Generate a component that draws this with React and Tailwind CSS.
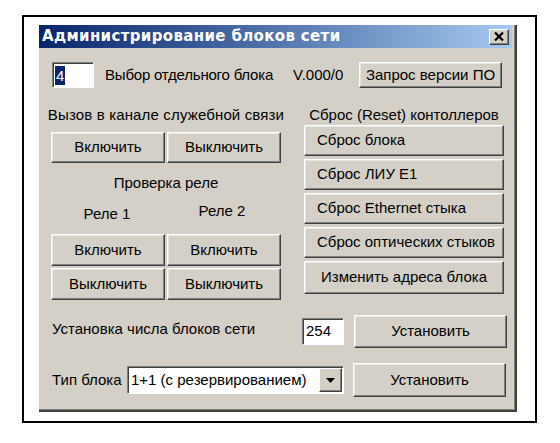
import React from 'react';

const font = { fontFamily: '"Liberation Sans", Arial, sans-serif' };
const titleFont = { fontFamily: '"DejaVu Sans", Verdana, sans-serif' };

// classic raised 3D button
const Btn = ({ children, className = '', left = false }) => (
  <button
    type="button"
    className={`flex items-center ${left ? 'justify-start pl-[12px]' : 'justify-center'} bg-[#d4d0c8] text-black text-[15px] border-t border-l border-white border-r border-b border-r-[#404040] border-b-[#404040] shadow-[inset_-1px_-1px_#808080,inset_1px_1px_#e8e6e2] ${className}`}
  >
    {children}
  </button>
);

// sunken edit box
const Field = ({ children, className = '' }) => (
  <div
    className={`flex items-center bg-white border-t border-l border-[#808080] border-r border-b border-r-white border-b-white shadow-[inset_1px_1px_#404040] ${className}`}
  >
    {children}
  </div>
);

export default function App() {
  return (
    <div className="w-[560px] h-[443px] bg-white pt-[15px] pl-[22px]" style={font}>
      <div className="w-[515px] h-[408px] border-2 border-black pl-[15px] pt-[8px]">
        <div className="w-[478px] h-[387px] bg-[#d4d0c8] border-r-2 border-b-2 border-[#404040] shadow-[inset_-1px_-1px_#808080] flex flex-col">
          {/* title bar */}
          <div className="w-[473px] h-[23px] flex items-center justify-between pl-[3px] pr-[3px] bg-gradient-to-r from-[#0a246a] to-[#a6caf0]">
            <span className="text-white font-bold text-[15px] tracking-[0.35px]" style={titleFont}>Администрирование блоков сети</span>
            <div className="w-[20px] h-[16px] flex items-center justify-center bg-[#d4d0c8] border-t border-l border-white border-r border-b border-r-[#404040] border-b-[#404040] shadow-[inset_-1px_-1px_#808080]">
              <svg width="10" height="9" viewBox="0 0 10 9">
                <path d="M1 0.5 L9 8.5 M9 0.5 L1 8.5" stroke="#000" strokeWidth="2.2" />
              </svg>
            </div>
          </div>

          <div className="pl-[12px] text-black text-[15px]">
            {/* block select row */}
            <div className="flex items-center mt-[14px]">
              <Field className="w-[42px] h-[26px] ml-[1px] pl-[2px]">
                <span className="bg-[#0a246a] text-white leading-[19px] px-[1px]">4</span>
              </Field>
              <span className="w-[188px] ml-[11px] tracking-[-0.2px]">Выбор отдельного блока</span>
              <span className="w-[66px]">V.000/0</span>
              <Btn className="w-[143px] h-[26px]">Запрос версии ПО</Btn>
            </div>

            {/* two columns */}
            <div className="flex mt-[17px]">
              <div className="w-[230px] flex flex-col">
                <div className="h-[20px] flex items-center justify-center whitespace-nowrap tracking-[0.15px]">Вызов в канале служебной связи</div>
                <div className="flex gap-[2px] mt-[7px]">
                  <Btn className="w-[114px] h-[31px]">Включить</Btn>
                  <Btn className="w-[114px] h-[31px]">Выключить</Btn>
                </div>
                <div className="h-[20px] flex items-center justify-center mt-[10px]">Проверка реле</div>
                <div className="flex mt-[11px]">
                  <div className="w-[112px] h-[20px] flex items-center justify-center">Реле 1</div>
                  <div className="w-[118px] h-[20px] flex items-center justify-center -mt-[3px]">Реле 2</div>
                </div>
                <div className="grid grid-cols-[114px_114px] gap-x-[2px] gap-y-[2px] mt-[10px]">
                  <Btn className="h-[32px]">Включить</Btn>
                  <Btn className="h-[32px]">Включить</Btn>
                  <Btn className="h-[32px]">Выключить</Btn>
                  <Btn className="h-[32px]">Выключить</Btn>
                </div>
              </div>

              <div className="w-[200px] ml-[23px] flex flex-col">
                <div className="h-[20px] flex items-center justify-center whitespace-nowrap">Сброс (Reset) контоллеров</div>
                <div className="flex flex-col gap-[3px]">
                  <Btn left className="h-[31px]">Сброс блока</Btn>
                  <Btn left className="h-[31px]">Сброс ЛИУ Е1</Btn>
                  <Btn left className="h-[31px]">Сброс Ethernet стыка</Btn>
                  <Btn left className="h-[31px]">Сброс оптических стыков</Btn>
                  <Btn className="h-[33px]">Изменить адреса блока</Btn>
                </div>
              </div>
            </div>

            {/* block count */}
            <div className="flex items-center mt-[15px]">
              <span className="w-[250px] ml-[1px] -mt-[4px]">Установка числа блоков сети</span>
              <Field className="w-[42px] h-[27px] pl-[3px]">254</Field>
              <Btn className="w-[153px] h-[33px] ml-[10px]">Установить</Btn>
            </div>

            {/* block type */}
            <div className="flex items-center mt-[15px]">
              <span className="w-[75px] ml-[1px]">Тип блока</span>
              <Field className="w-[217px] h-[28px] pl-[3px] pr-[1px] justify-between">
                <span>1+1 (с резервированием)</span>
                <div className="w-[23px] h-[24px] flex items-center justify-center bg-[#d4d0c8] border-t border-l border-white border-r border-b border-r-[#404040] border-b-[#404040] shadow-[inset_-1px_-1px_#808080]">
                  <svg width="9" height="5" viewBox="0 0 9 5">
                    <path d="M0 0 H9 L4.5 5 Z" fill="#000" />
                  </svg>
                </div>
              </Field>
              <Btn className="w-[153px] h-[34px] ml-[9px]">Установить</Btn>
            </div>
          </div>
        </div>
      </div>
    </div>
  );
}
